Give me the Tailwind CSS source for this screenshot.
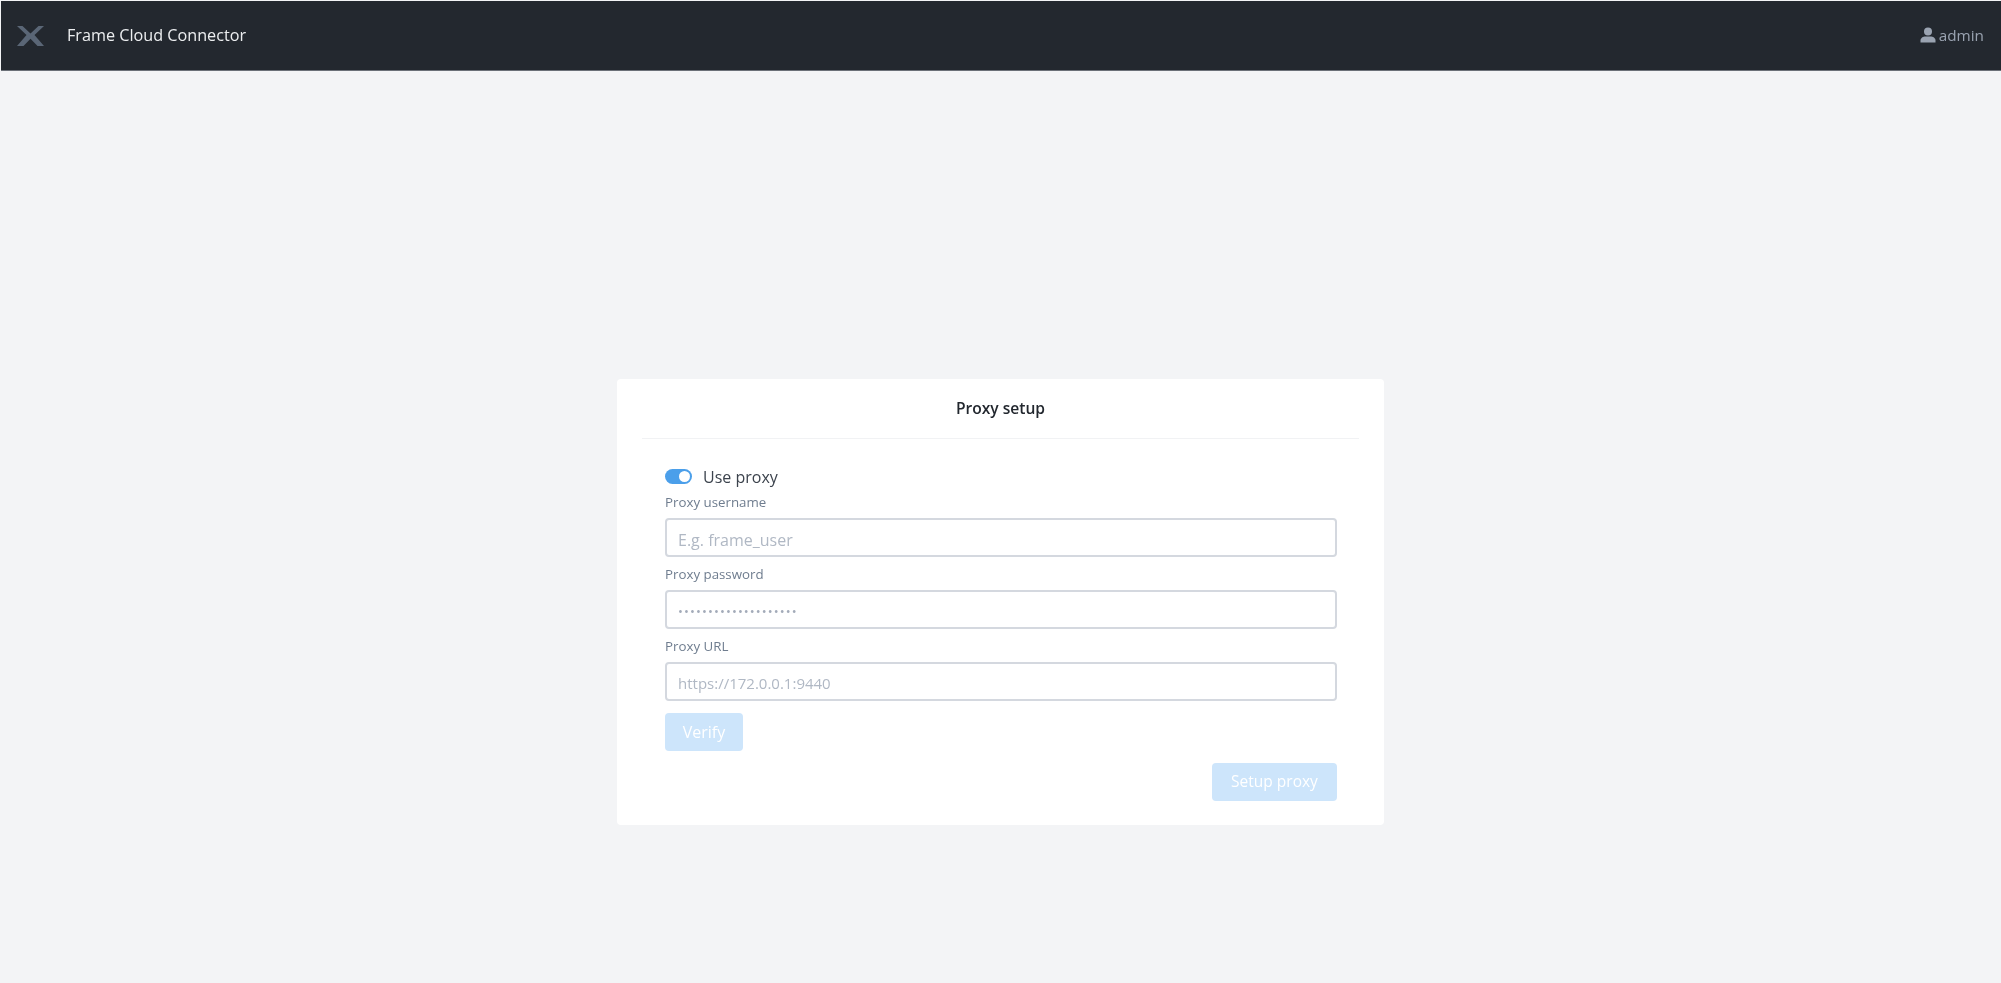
<!DOCTYPE html>
<html lang="en">
<head>
<meta charset="utf-8">
<title>Frame Cloud Connector</title>
<script src="https://cdn.jsdelivr.net/npm/@tailwindcss/browser@4"></script>
</head>
<body class="bg-white">
<div class="h-[983px] w-[2001px] overflow-hidden pl-px pt-px bg-[#f3f4f6] font-['Open_Sans','Liberation_Sans',sans-serif] flex flex-col blur-[0.5px]">
  <header class="h-[70px] shrink-0 bg-[#23282f] border-b border-[#6b7078] flex items-center pl-[16px] pr-[17px]">
    <svg class="w-[27px] h-[20px]" viewBox="0 0 27 20" aria-hidden="true">
      <path d="M0 0h5.500l8 7.500L21.500 0H27l-9.500 9L27 20h-6.500l-7-7.200L6.500 20H0l9.500-11z" fill="#5a6676"/>
    </svg>
    <span class="ml-[23px] mb-[1px] text-[16.200px] font-medium text-[#eceef0]">Frame Cloud Connector</span>
    <div class="ml-auto flex items-center text-[#9aa3b1]">
      <svg class="w-[16px] h-[16px] mb-[2px]" viewBox="0 0 16 16" aria-hidden="true">
        <circle cx="8" cy="4.500" r="4" fill="currentColor"/>
        <path d="M0.500 15.500v-2c0-2.500 2.500-4 5-4h5c2.500 0 5 1.500 5 4v2z" fill="currentColor"/>
      </svg>
      <span class="ml-[3px] text-[15.300px]">admin</span>
    </div>
  </header>
  <main class="flex-1 pl-[616px] pt-[308px]">
    <section class="w-[767px] h-[446px] bg-white rounded-[4px] px-[25px]">
      <h1 class="h-[60px] pt-[1px] border-b border-[#f1f2f4] flex items-center justify-center text-[15.600px] font-semibold text-[#22272e]">Proxy setup</h1>
      <form class="pl-[23px] pr-[22px] pt-[29px] flex flex-col">
        <div class="flex items-center h-[16px]">
          <span class="w-[27px] h-[15px] rounded-full bg-[#4b9fea] relative block">
            <span class="absolute right-[2px] top-[2px] w-[11px] h-[11px] rounded-full bg-white"></span>
          </span>
          <span class="ml-[11px] pt-[1px] text-[16px] text-[#3c434d]">Use proxy</span>
        </div>
        <label class="mt-[10px] h-[16px] leading-[16px] text-[13.300px] text-[#6f7d8f]">Proxy username</label>
        <div class="mt-[8px] h-[39px] border-2 border-[#d4d8df] rounded-[4px] bg-white flex items-center pl-[11px] pt-[4px] text-[16px] text-[#b0b8c4]">E.g. frame_user</div>
        <label class="mt-[9px] h-[16px] leading-[16px] text-[13.300px] text-[#6f7d8f]">Proxy password</label>
        <div class="mt-[8px] h-[39px] border-2 border-[#d4d8df] rounded-[4px] bg-white flex items-center pl-[11px] pt-[4px] text-[13px] text-[#a3abb9] tracking-[1.100px]">••••••••••••••••••••</div>
        <label class="mt-[9px] h-[16px] leading-[16px] text-[13.300px] text-[#6f7d8f]">Proxy URL</label>
        <div class="mt-[8px] h-[39px] border-2 border-[#d4d8df] rounded-[4px] bg-white flex items-center pl-[11px] pt-[3px] text-[15px] text-[#b0b8c4]">https://172.0.0.1:9440</div>
        <button type="button" class="mt-[12px] w-[78px] h-[38px] rounded-[4px] bg-[#cde5fb] text-white text-[16px]">Verify</button>
        <button type="button" class="mt-[12px] self-end w-[125px] h-[38px] rounded-[4px] bg-[#cde5fb] text-white text-[15.500px]">Setup proxy</button>
      </form>
    </section>
  </main>
</div>
</body>
</html>
